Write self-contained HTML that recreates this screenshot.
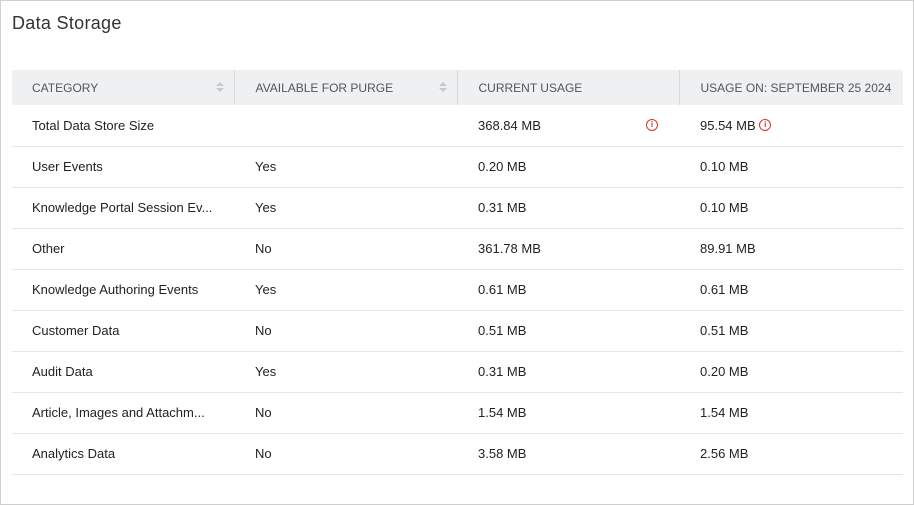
<!DOCTYPE html>
<html><head><style>
*{margin:0;padding:0;box-sizing:border-box}
body{width:914px;height:505px;background:#fff;font-family:"Liberation Sans",sans-serif;color:#222;position:relative;overflow:hidden}
.frame{position:absolute;left:0;top:0;width:914px;height:505px;border:1px solid #cfcfcf}
h1{position:absolute;left:12px;top:13px;font-size:18px;font-weight:normal;color:#333;letter-spacing:0.3px}
table{position:absolute;left:12px;top:70px;width:891px;border-collapse:collapse;font-size:13px;table-layout:fixed}
th{background:#eff0f2;height:35px;text-align:left;font-weight:normal;color:#555;font-size:12px;padding:0 20px 0 21px;position:relative;border-left:1px solid #d8d8d8;white-space:nowrap}
th:first-child{border-left:none;padding-left:20px}
td{height:41px;padding:0 20px 0 21px;border-bottom:1px solid #e6e6e6;color:#222;position:relative;white-space:nowrap}
td:first-child{padding-left:20px}
.s{position:absolute;right:10px;top:12px;width:8px;height:11px}
.s:before{content:"";position:absolute;left:0;top:0;border-left:4px solid transparent;border-right:4px solid transparent;border-bottom:4px solid #c8c8c8}
.s:after{content:"";position:absolute;left:0;top:6px;border-left:4px solid transparent;border-right:4px solid transparent;border-top:4px solid #c8c8c8}
.i{display:inline-block;width:12px;height:12px;border:1.3px solid #d9302a;border-radius:50%;color:#d9302a;font-size:8px;line-height:9px;text-align:center;font-weight:bold;vertical-align:middle;position:relative;top:-1px}
</style></head><body>
<div class="frame"></div>
<h1>Data Storage</h1>
<table>
<colgroup><col style="width:222px"><col style="width:223px"><col style="width:222px"><col style="width:224px"></colgroup>
<tr><th>CATEGORY<span class="s"></span></th><th>AVAILABLE FOR PURGE<span class="s"></span></th><th>CURRENT USAGE</th><th>USAGE ON: SEPTEMBER 25 2024</th></tr>
<tr><td>Total Data Store Size</td><td></td><td>368.84 MB<span class="i" style="position:absolute;left:189px;top:14px">i</span></td><td>95.54 MB <span class="i">i</span></td></tr>
<tr><td>User Events</td><td>Yes</td><td>0.20 MB</td><td>0.10 MB</td></tr>
<tr><td>Knowledge Portal Session Ev...</td><td>Yes</td><td>0.31 MB</td><td>0.10 MB</td></tr>
<tr><td>Other</td><td>No</td><td>361.78 MB</td><td>89.91 MB</td></tr>
<tr><td>Knowledge Authoring Events</td><td>Yes</td><td>0.61 MB</td><td>0.61 MB</td></tr>
<tr><td>Customer Data</td><td>No</td><td>0.51 MB</td><td>0.51 MB</td></tr>
<tr><td>Audit Data</td><td>Yes</td><td>0.31 MB</td><td>0.20 MB</td></tr>
<tr><td>Article, Images and Attachm...</td><td>No</td><td>1.54 MB</td><td>1.54 MB</td></tr>
<tr><td>Analytics Data</td><td>No</td><td>3.58 MB</td><td>2.56 MB</td></tr>
</table>
</body></html>
